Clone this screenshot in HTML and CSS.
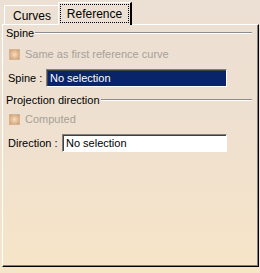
FILE: index.html
```html
<!DOCTYPE html>
<html>
<head>
<meta charset="utf-8">
<link rel="stylesheet" href="styles.css">
</head>
<body>
<div class="window">
  <div class="tabs">
    <div class="tab">Curves</div>
    <div class="tab tab-active"><span class="focus">Reference</span></div>
  </div>
  <div class="panel">
    <div class="group-title"><span>Spine</span><div class="etch"></div></div>
    <div class="check-row"><span class="checkbox"></span><span class="disabled">Same as first reference curve</span></div>
    <div class="field-row">
      <span class="label">Spine :</span>
      <div class="input input-selected spine-input">No selection</div>
    </div>
    <div class="group-title second"><span>Projection direction</span><div class="etch"></div></div>
    <div class="check-row second"><span class="checkbox"></span><span class="disabled">Computed</span></div>
    <div class="field-row">
      <span class="label">Direction :</span>
      <div class="input dir-input">No selection</div>
    </div>
  </div>
</div>
</body>
</html>
```
FILE: styles.css
```css
html, body {
  margin: 0;
  padding: 0;
}
body {
  width: 260px;
  height: 273px;
  font-family: "Liberation Sans", Arial, sans-serif;
  font-size: 11px;
  color: #000;
  background: linear-gradient(to bottom, #ece0d4 0%, #efe0cf 50%, #f6e5c7 100%);
  overflow: hidden;
}
.window {
  padding-left: 2px;
}
.tabs {
  display: flex;
  align-items: flex-end;
  height: 24px;
  padding-left: 2px;
}
.tab {
  box-sizing: border-box;
  height: 19px;
  width: 55px;
  border-top: 1px solid #fff;
  border-left: 1px solid #fff;
  display: flex;
  align-items: center;
  justify-content: center;
  padding-top: 1px;
  font-size: 12px;
}
.tab-active {
  height: 23px;
  width: 74px;
  margin-left: -1px;
  margin-bottom: -1px;
  border-right: 2px solid #000;
  position: relative;
  z-index: 2;
  background: #ece0d4;
  padding: 1px 1px 2px 1px;
}
.focus {
  flex: 1;
  align-self: stretch;
  display: flex;
  align-items: center;
  justify-content: center;
  border: 1px dotted #000;
}
.panel {
  box-sizing: border-box;
  width: 257px;
  height: 243px;
  border-top: 1px solid #fff;
  border-left: 1px solid #fff;
  border-right: 1px solid #000;
  border-bottom: 1px solid #000;
  box-shadow: inset -1px -1px 0 #808080;
  padding: 1px 6px 0 3px;
}
.group-title {
  display: flex;
  align-items: center;
  height: 13px;
}
.group-title span {
  padding-right: 1px;
}
.group-title.second {
  margin-top: 6px;
}
.etch {
  flex: 1;
  height: 0;
  border-top: 1px solid #8c8c8c;
  border-bottom: 1px solid #fff;
  margin-top: 1px;
}
.check-row {
  display: flex;
  align-items: center;
  height: 14px;
  margin-top: 8px;
  padding-left: 3px;
  gap: 5px;
}
.check-row.second {
  margin-top: 6px;
}
.checkbox {
  box-sizing: border-box;
  width: 11px;
  height: 11px;
  border: 1px solid #d4b496;
  background: radial-gradient(circle at 50% 50%, #f6dcc0 0%, #e0b48a 65%, #c8966c 100%);
}
.disabled {
  color: #a6a09a;
}
.field-row {
  display: flex;
  align-items: center;
  height: 18px;
  margin-top: 8px;
  padding-left: 2px;
}
.label {
  white-space: pre;
}
.input {
  box-sizing: border-box;
  height: 18px;
  border-top: 1px solid #808080;
  border-left: 1px solid #808080;
  border-right: 1px solid #fff;
  border-bottom: 1px solid #fff;
  box-shadow: inset 1px 1px 0 #404040;
  display: flex;
  align-items: center;
  padding-left: 3px;
  background: #fff;
  margin-left: auto;
  margin-right: 25px;
}
.input-selected {
  background: #0a246a;
  color: #fff;
}
.spine-input {
  width: 181px;
}
.dir-input {
  width: 165px;
}
```
